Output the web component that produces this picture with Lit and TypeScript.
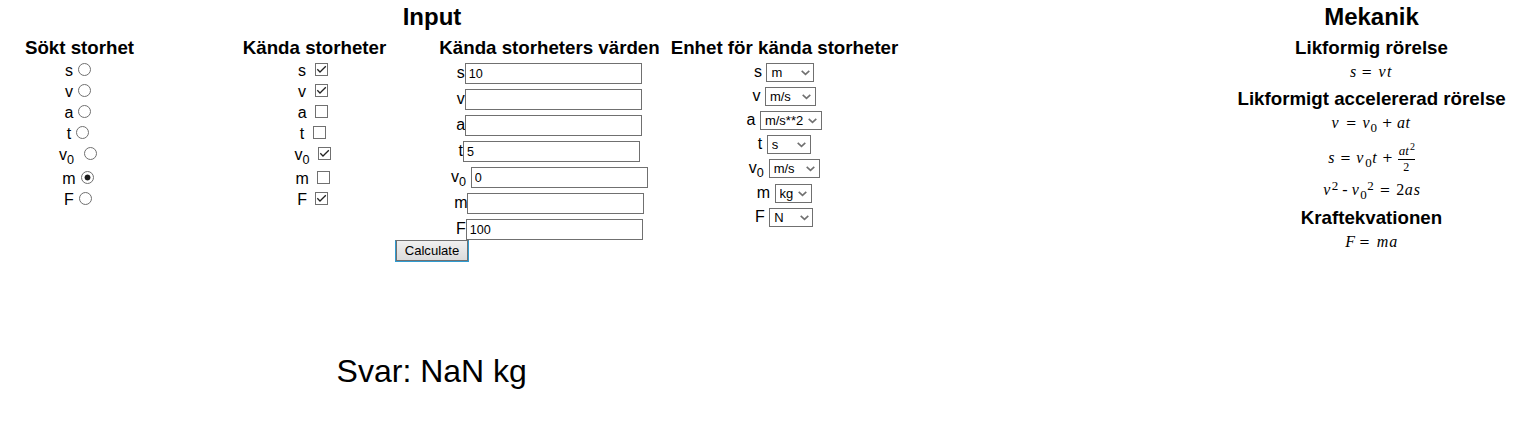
import { LitElement, html, css, svg, nothing } from "lit";
import { customElement } from "lit/decorators.js";

interface Quantity {
  name: string;
  sub?: string;
  known: boolean;
  value: string;
  unit: string;
  unitWidth: number;
}

const QUANTITIES: Quantity[] = [
  { name: "s", known: true, value: "10", unit: "m", unitWidth: 48 },
  { name: "v", known: true, value: "", unit: "m/s", unitWidth: 51 },
  { name: "a", known: false, value: "", unit: "m/s**2", unitWidth: 62 },
  { name: "t", known: false, value: "5", unit: "s", unitWidth: 44 },
  { name: "v", sub: "0", known: true, value: "0", unit: "m/s", unitWidth: 51 },
  { name: "m", known: false, value: "", unit: "kg", unitWidth: 37 },
  { name: "F", known: true, value: "100", unit: "N", unitWidth: 44 },
];

// A formula token: text, advance width, and kind (variable when omitted).
type Token = [string, number, ("op" | "low" | "high" | "num")?];

const UNIFORM: Token[] = [["s", 12], ["=", 16.5, "op"], ["v", 8.5], ["t", 6]];
const VELOCITY: Token[] = [["v", 15], ["=", 16, "op"], ["v", 8], ["0", 12, "low"], ["+", 14.5, "op"], ["a", 8.5], ["t", 6]];
const DISTANCE: Token[] = [["s", 12.5], ["=", 15.5, "op"], ["v", 9], ["0", 7, "low"], ["t", 10.5], ["+", 15, "op"]];
const SQUARES: Token[] = [
  ["v", 8.5], ["2", 10.5, "high"], ["-", 9.5, "num"], ["v", 8.5], ["0", 7, "low"], ["2", 13, "high"],
  ["=", 16, "op"], ["2", 8.5, "num"], ["a", 9], ["s", 6],
];
const FORCE: Token[] = [["F", 14.5], ["=", 17, "op"], ["m", 12.5], ["a", 8.5]];

@customElement("app-root")
export class AppRoot extends LitElement {
  static styles = css`
    :host { display: block; height: 424px; overflow: hidden; background: #fff; color: #000;
      font: 16px/18px "Liberation Sans", Arial, sans-serif; }
    * { box-sizing: border-box; }
    .page { display: flex; justify-content: space-between; height: 353px; }
    .calc { width: 920px; }
    h2, h3 { margin: 0; font-weight: bold; white-space: nowrap; text-align: center; }
    h2 { font-size: 24px; line-height: 28px; padding-top: 3px; height: 37px; }
    h3 { font-size: 18.72px; line-height: 22px; height: 22px; }
    .calc h2 { width: 864px; }
    .columns { display: flex; height: 203px; }
    .col { display: flex; flex-direction: column; align-items: center; flex: none; }
    .c1 { width: 159px; }
    .c2 { width: 143px; margin-left: 84px; }
    .c3 { width: 219px; margin-left: 54px; }
    .c4 { width: 227px; margin-left: 12px; }
    .row { display: flex; align-items: flex-start; white-space: pre; flex: none; padding-top: 4px; }
    .c1 .row, .c2 .row { height: 21px; }
    .c1 .row.tall, .c2 .row.tall { height: 24px; }
    .c1 .label, .c2 .label { margin-top: -1px; }
    .c2 .row { margin-right: 0.4px; }
    .c3 .row { height: 26px; margin-right: 0.4px; }
    .c3 .label { margin-top: 1px; }
    .c4 .row { height: 24px; margin-right: 0.6px; }
    .c4 .row.tall { height: 25px; }
    .label { display: block; height: 18px; line-height: 18px; }
    .label sub { display: inline-block; width: 7.4px; font-size: 12.6px; line-height: 0; vertical-align: -4px; }
    .radio { appearance: none; width: 13px; height: 13px; margin: 0 3px 0 5px; border: 1px solid #707070;
      border-radius: 50%; background: #fff; display: block; }
    .radio:checked { background: radial-gradient(circle at center, #1a1a1a 2.6px, #fff 3.3px); }
    .check { display: block; width: 13px; height: 13px; margin: 0 3px 0 4px; }
    .text { appearance: none; display: block; width: 177px; height: 21px; margin: 0; padding: 1px 3px; border: 1px solid #707070;
      border-radius: 0; background: #fff; color: #000; font: 12.6px/17px "Liberation Sans", Arial, sans-serif; outline: none; }
    .pick { display: grid; height: 19px; }
    .pick select { grid-area: 1 / 1; appearance: none; width: 100%; height: 19px; margin: 0; padding: 0 0 0 4px;
      border: 1px solid #707070; border-radius: 0; background: #fff; color: #000;
      font: 13px/17px "Liberation Sans", Arial, sans-serif; }
    .pick svg { grid-area: 1 / 1; justify-self: end; margin: 7px 4.5px 0 0; pointer-events: none; }
    .calculate { display: block; width: 74px; height: 22px; margin: 0 0 0 395px; padding: 0; border: 1px solid #2f9bd0;
      border-top-color: #707070; border-radius: 0; outline: 0;
      box-shadow: inset 1px 0 #707070, inset -1px -1px #707070; background: linear-gradient(#f0f0f0, #dadada);
      color: #000; font: 13.1px/18px "Liberation Sans", Arial, sans-serif; }
    .formulas { width: 268px; margin-right: 18.5px; }
    .eq { display: flex; justify-content: center; align-items: baseline; white-space: pre;
      font: italic 16px/20px "Liberation Serif", "Times New Roman", serif; height: 29px; padding-top: 3px; }
    .eq.second { height: 35px; }
    .eq.third { height: 32px; }
    .eq.fourth { height: 30px; }
    .token { flex: none; }
    .op { font: 13px/18px "DejaVu Serif", serif; text-indent: -0.8px; margin-bottom: 1px; position: relative; top: -0.6px; }
    .num { font-style: normal; }
    .low, .high { font-style: normal; font-size: 13px; line-height: 14px; position: relative; }
    .low { top: 4px; }
    .high { top: -5px; }
    .frac { flex: none; width: 17px; align-self: flex-start; margin-top: -4px; font-size: 13px; line-height: 14px; }
    .over { display: flex; align-items: baseline; height: 16px; padding-left: 1px; border-bottom: 1px solid #000; }
    .power { font-size: 10px; line-height: 10px; font-style: normal; position: relative; top: -5px; margin-left: 1px; }
    .under { height: 14px; text-align: center; font-size: 12px; font-style: normal; }
    .answer { font-size: 32px; line-height: 37px; padding-left: 336.6px; white-space: pre; }
  `;

  private label(q: Quantity, space: boolean) {
    return html`<span class="label">${q.name}${q.sub ? html`<sub>${q.sub}</sub>` : nothing}${space ? " " : ""}</span>`;
  }

  private rows(space: (q: Quantity) => boolean, control: (q: Quantity) => unknown) {
    return QUANTITIES.map((q) => html`<div class="row ${q.sub ? "tall" : ""}">${this.label(q, space(q))}${control(q)}</div>`);
  }

  private check(on: boolean) {
    return html`<svg class="check" viewBox="0 0 13 13" role="checkbox" aria-checked=${on}>
      <rect x=".5" y=".5" width="12" height="12" fill="#fff" stroke="#707070" />
      ${on ? svg`<path d="M2.3 6.3L5 9L10.8 3.3" fill="none" stroke="#222" stroke-width="1.3" />` : nothing}
    </svg>`;
  }

  private tokens(list: Token[]) {
    return list.map(([text, width, kind]) => html`<span class="token ${kind ?? ""}" style="width:${width}px">${text}</span>`);
  }

  render() {
    return html`
      <div class="page">
        <main class="calc">
          <h2>Input</h2>
          <div class="columns">
            <section class="col c1"><h3>Sökt storhet</h3>
              ${this.rows((q) => !!q.sub, (q) => html`<input class="radio" type="radio" name="wanted" ?checked=${q.name === "m"} />`)}
            </section>
            <section class="col c2"><h3>Kända storheter</h3>
              ${this.rows(() => true, (q) => this.check(q.known))}
            </section>
            <section class="col c3"><h3>Kända storheters värden</h3>
              ${this.rows((q) => !!q.sub, (q) => html`<input class="text" type="text" .value=${q.value} />`)}
            </section>
            <section class="col c4"><h3>Enhet för kända storheter</h3>
              ${this.rows(() => true, (q) => html`<span class="pick" style="width:${q.unitWidth}px"><select><option>${q.unit}</option></select>
                <svg width="9" height="6" viewBox="0 0 9 6"><path d="M.7 .9L4.5 4.4L8.3 .9" fill="none" stroke="#707070" stroke-width="1.6" /></svg></span>`)}
            </section>
          </div>
          <button class="calculate">Calculate</button>
        </main>
        <aside class="formulas">
          <h2>Mekanik</h2>
          <h3>Likformig rörelse</h3>
          <div class="eq">${this.tokens(UNIFORM)}</div>
          <h3>Likformigt accelererad rörelse</h3>
          <div class="eq second">${this.tokens(VELOCITY)}</div>
          <div class="eq third">${this.tokens(DISTANCE)}<div class="frac"><div class="over">at<span class="power">2</span></div><div class="under">2</div></div></div>
          <div class="eq fourth">${this.tokens(SQUARES)}</div>
          <h3>Kraftekvationen</h3>
          <div class="eq">${this.tokens(FORCE)}</div>
        </aside>
      </div>
      <div class="answer">Svar: NaN kg</div>
    `;
  }
}
